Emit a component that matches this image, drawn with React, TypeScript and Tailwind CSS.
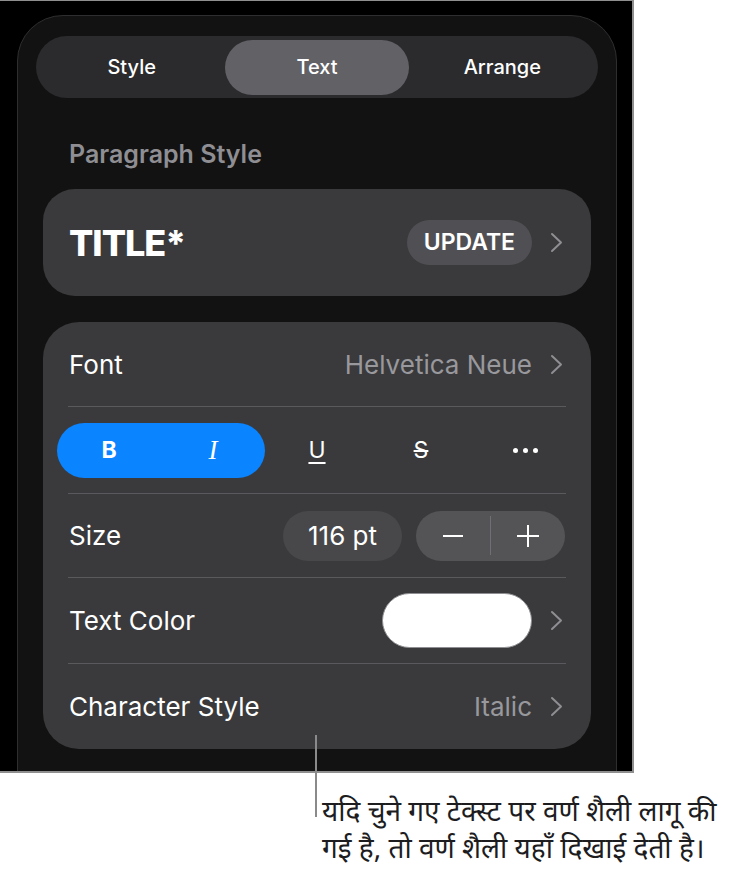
import React from "react"

const ui = { fontFamily: "Inter, 'Noto Sans', sans-serif" }

function Chevron() {
  return (
    <svg width="13" height="21" viewBox="0 0 13 21" className="shrink-0">
      <path d="M2 2 L11 10.5 L2 19" fill="none" stroke="#8e8e93" strokeWidth="2" strokeLinecap="round" strokeLinejoin="round" />
    </svg>
  )
}

function Separator() {
  return <div className="mx-[25px] h-px bg-[#5a5a5e]" />
}

export default function App() {
  return (
    <div className="relative w-[732px] h-[876px] bg-white overflow-hidden" style={ui}>
      <div className="w-[634px] h-[773px] bg-black border-t border-r-2 border-b-2 border-[#8f8f8f] overflow-hidden">
        <div className="ml-[17px] mt-[14px] w-[600px] h-[820px] rounded-t-[46px] border border-[#2e2e30] bg-[#121212] px-[18px] pt-[20px]">
          {/* tabs */}
          <div className="flex h-[62px] items-center gap-[2px] rounded-full bg-[#2b2b2e] p-[4px] text-[20px] font-medium text-white">
            <div className="flex h-full flex-1 items-center justify-center">Style</div>
            <div className="flex h-[55px] flex-1 items-center justify-center rounded-full bg-[#626266]">Text</div>
            <div className="flex h-full flex-1 items-center justify-center">Arrange</div>
          </div>

          <div className="mt-[41px] pl-[33px] text-[25px] leading-[30px] font-semibold text-[#8e8e93]">
            Paragraph Style
          </div>

          {/* paragraph style card */}
          <div className="mx-[7px] mt-[20px] flex h-[107px] items-center rounded-[32px] bg-[#3a3a3c] pl-[26px] pr-[28px]">
            <div className="flex-1 text-[36px] font-extrabold tracking-[-1px] text-white">TITLE*</div>
            <div className="flex h-[45px] items-center rounded-full bg-[#505054] px-[17px] text-[23px] font-semibold text-white">
              UPDATE
            </div>
            <div className="ml-[18px]">
              <Chevron />
            </div>
          </div>

          {/* character card */}
          <div className="mx-[7px] mt-[26px] rounded-[36px] bg-[#3a3a3c] text-[26px] text-white">
            <div className="flex h-[84px] items-center pl-[26px] pr-[28px]">
              <div className="flex-1">Font</div>
              <div className="text-[#98989d]">Helvetica Neue</div>
              <div className="ml-[18px]">
                <Chevron />
              </div>
            </div>
            <Separator />
            <div className="flex h-[86px] items-center pl-[14px]">
              <div className="flex h-[55px] w-[208px] items-center rounded-full bg-[#0a84ff]">
                <div className="flex-1 text-center text-[23px] font-bold">B</div>
                <div
                  className="flex-1 text-center text-[27px] italic"
                  style={{ fontFamily: "'Liberation Serif', serif" }}
                >
                  I
                </div>
              </div>
              <div className="w-[104px] text-center text-[23px] underline decoration-[1.5px] underline-offset-[4px]">U</div>
              <div className="w-[104px] text-center text-[23px] line-through decoration-[1.5px]">S</div>
              <div className="flex w-[104px] items-center justify-center gap-[5px]">
                <div className="h-[5px] w-[5px] rounded-full bg-white" />
                <div className="h-[5px] w-[5px] rounded-full bg-white" />
                <div className="h-[5px] w-[5px] rounded-full bg-white" />
              </div>
            </div>
            <Separator />
            <div className="flex h-[83px] items-center pl-[26px] pr-[26px]">
              <div className="flex-1">Size</div>
              <div className="flex h-[50px] w-[119px] items-center justify-center rounded-full bg-[#48484b]">116 pt</div>
              <div className="ml-[14px] flex h-[50px] w-[149px] items-center rounded-full bg-[#545457]">
                <div className="flex flex-1 justify-center">
                  <div className="h-[2px] w-[20px] bg-white" />
                </div>
                <div className="h-[39px] w-px bg-[#707074]" />
                <div className="relative flex flex-1 items-center justify-center">
                  <div className="h-[2px] w-[22px] bg-white" />
                  <div className="absolute h-[22px] w-[2px] bg-white" />
                </div>
              </div>
            </div>
            <Separator />
            <div className="flex h-[85px] items-center pl-[26px] pr-[28px]">
              <div className="flex-1">Text Color</div>
              <div className="h-[55px] w-[150px] rounded-full border border-[#8e8e93] bg-white" />
              <div className="ml-[18px]">
                <Chevron />
              </div>
            </div>
            <Separator />
            <div className="flex h-[85px] items-center pl-[26px] pr-[28px]">
              <div className="flex-1">Character Style</div>
              <div className="text-[#98989d]">Italic</div>
              <div className="ml-[18px]">
                <Chevron />
              </div>
            </div>
          </div>
        </div>
      </div>

      {/* callout */}
      <div className="absolute left-[315px] top-[735px] h-[82px] w-[2px] bg-[#8a8a8a]" />
      <div
        className="pl-[322px] pt-[19px] text-[28px] leading-[37px] text-[#1d1d1f]"
        style={{ fontFamily: "'Noto Sans', sans-serif" }}
      >
        <div className="whitespace-nowrap">यदि चुने गए टेक्स्ट पर वर्ण शैली लागू की</div>
        <div className="whitespace-nowrap">गई है, तो वर्ण शैली यहाँ दिखाई देती है।</div>
      </div>
    </div>
  )
}
